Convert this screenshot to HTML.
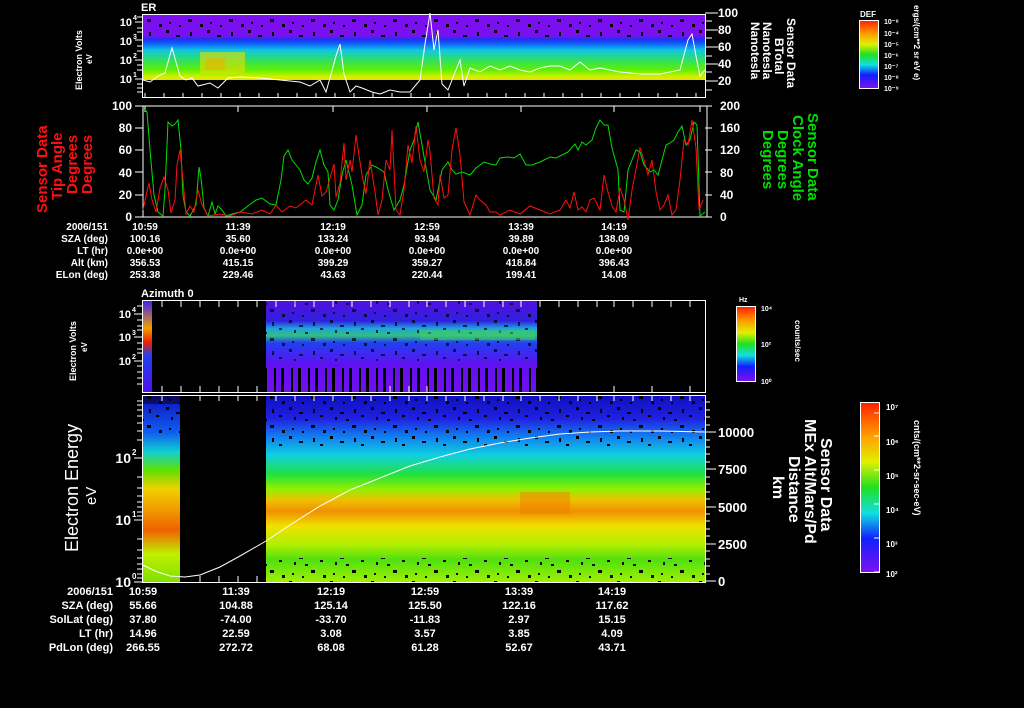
<!DOCTYPE html>
<html><head><meta charset="utf-8"><style>
html,body{margin:0;padding:0;background:#000;}
svg{display:block;}
text{font-family:"Liberation Sans",sans-serif;fill:#fff;font-weight:bold;}
</style></head><body>
<svg width="1024" height="708" viewBox="0 0 1024 708" xmlns="http://www.w3.org/2000/svg">
<defs>
<linearGradient id="p1" x1="0" y1="0" x2="0" y2="1">
<stop offset="0" stop-color="#7a10f0"/><stop offset="0.33" stop-color="#7a10f0"/>
<stop offset="0.38" stop-color="#2030f0"/><stop offset="0.45" stop-color="#1060ff"/>
<stop offset="0.55" stop-color="#10c8e0"/><stop offset="0.7" stop-color="#30e060"/>
<stop offset="0.85" stop-color="#60f000"/><stop offset="0.95" stop-color="#d0f000"/><stop offset="1" stop-color="#f0e000"/>
</linearGradient>
<linearGradient id="p4" x1="0" y1="0" x2="0" y2="1">
<stop offset="0" stop-color="#1010c0"/><stop offset="0.12" stop-color="#2020e0"/>
<stop offset="0.22" stop-color="#1080f0"/><stop offset="0.32" stop-color="#10d0e0"/>
<stop offset="0.42" stop-color="#20e040"/><stop offset="0.5" stop-color="#90f000"/>
<stop offset="0.56" stop-color="#f0c000"/><stop offset="0.62" stop-color="#f09000"/>
<stop offset="0.7" stop-color="#f0e000"/><stop offset="0.8" stop-color="#b0f000"/>
<stop offset="0.88" stop-color="#50e010"/><stop offset="1" stop-color="#a0f000"/>
</linearGradient>
<linearGradient id="p4l" x1="0" y1="0" x2="0" y2="1">
<stop offset="0" stop-color="#1010c0"/><stop offset="0.2" stop-color="#1060f0"/>
<stop offset="0.3" stop-color="#10d0d0"/><stop offset="0.4" stop-color="#60e000"/>
<stop offset="0.5" stop-color="#f0d000"/><stop offset="0.6" stop-color="#f0a000"/>
<stop offset="0.72" stop-color="#f06000"/><stop offset="0.85" stop-color="#c0f000"/><stop offset="1" stop-color="#80e000"/>
</linearGradient>
<linearGradient id="p3" x1="0" y1="0" x2="0" y2="1">
<stop offset="0" stop-color="#5010e0"/><stop offset="0.22" stop-color="#3020e0"/>
<stop offset="0.3" stop-color="#20a0e0"/><stop offset="0.38" stop-color="#30c080"/>
<stop offset="0.46" stop-color="#2040f0"/><stop offset="0.7" stop-color="#6010f0"/><stop offset="1" stop-color="#7010f0"/>
</linearGradient>
<linearGradient id="p3l" x1="0" y1="0" x2="0" y2="1">
<stop offset="0" stop-color="#4020f0"/><stop offset="0.3" stop-color="#f0a000"/>
<stop offset="0.45" stop-color="#f02000"/><stop offset="0.6" stop-color="#2040f0"/><stop offset="1" stop-color="#5010f0"/>
</linearGradient>
<linearGradient id="cb" x1="0" y1="0" x2="0" y2="1">
<stop offset="0" stop-color="#ff2000"/><stop offset="0.2" stop-color="#ffa000"/>
<stop offset="0.35" stop-color="#e0f000"/><stop offset="0.5" stop-color="#20e020"/>
<stop offset="0.65" stop-color="#10e0e0"/><stop offset="0.8" stop-color="#1020ff"/><stop offset="1" stop-color="#8010f0"/>
</linearGradient>
<pattern id="spk" width="41" height="29" patternUnits="userSpaceOnUse">
<rect x="2" y="1" width="3" height="3" fill="#000"/><rect x="12" y="6" width="4" height="2" fill="#000"/>
<rect x="7" y="11" width="2" height="3" fill="#000"/><rect x="18" y="13" width="3" height="2" fill="#000"/>
<rect x="26" y="3" width="2" height="4" fill="#000"/><rect x="33" y="9" width="3" height="2" fill="#000"/>
<rect x="24" y="19" width="4" height="3" fill="#000"/><rect x="5" y="22" width="2" height="2" fill="#000"/>
<rect x="36" y="24" width="3" height="3" fill="#000"/><rect x="15" y="25" width="2" height="2" fill="#000"/>
</pattern>
<pattern id="vst" width="17" height="40" patternUnits="userSpaceOnUse">
<rect x="2" y="0" width="2" height="40" fill="#000"/><rect x="9" y="0" width="3" height="40" fill="#000"/>
</pattern>
</defs>

<!-- PANEL 1 -->
<text x="141" y="11" font-size="11">ER</text>
<rect x="143" y="14" width="562" height="66" fill="url(#p1)"/>
<rect x="143" y="14" width="562" height="24" fill="url(#spk)"/>
<rect x="200" y="52" width="45" height="22" fill="#e8e000" opacity="0.6"/>
<rect x="205" y="58" width="20" height="12" fill="#f0b000" opacity="0.6"/>
<polyline fill="none" stroke="#fff" stroke-width="1" points="143,80 150,82 158,76 165,73 172,48 176,62 180,76 186,80 192,78 198,86 210,83 218,88 228,78 240,77 260,78 280,80 300,82 310,86 320,80 326,92 330,78 336,56 340,44 344,74 350,92 356,86 362,88 372,92 380,94 390,90 400,92 410,92 420,80 425,44 430,13 434,50 438,30 442,84 448,90 452,80 460,60 464,86 470,68 480,72 490,66 500,70 510,66 520,70 530,72 540,68 550,66 560,66 570,70 580,62 590,70 600,68 610,70 620,72 640,74 660,74 680,70 688,40 692,34 696,56 700,76 705,70"/>
<rect x="142.5" y="14.5" width="563" height="83" fill="none" stroke="#fff"/>
<g stroke="#fff">
<path d="M145 93V98M164 93V98M183 93V98M202 93V98M221 93V98M240 93V98M259 93V98M278 93V98M297 93V98M316 93V98M335 93V98M354 93V98M373 93V98M392 93V98M411 93V98M430 93V98M449 93V98M468 93V98M487 93V98M506 93V98M525 93V98M544 93V98M563 93V98M582 93V98M601 93V98M620 93V98M639 93V98M658 93V98M677 93V98M696 93V98"/>
<path d="M135 22H143M135 40H143M135 60H143M135 79H143M137 17H143M137 28H143M137 32H143M137 46H143M137 51H143M137 65H143M137 70H143M137 84H143M137 88H143M137 92H143"/>
<path d="M705 13H718M705 30H718M705 47H718M705 64H718M705 81H718M705 21H712M705 38H712M705 56H712M705 72H712M705 90H712"/>
</g>
<g font-size="11" text-anchor="end">
<text x="132" y="26">10</text><text x="132" y="45">10</text><text x="132" y="64">10</text><text x="132" y="83">10</text>
</g>
<g font-size="7"><text x="133" y="20">4</text><text x="133" y="39">3</text><text x="133" y="58">2</text><text x="133" y="77">1</text></g>
<g font-size="12"><text x="718" y="17">100</text><text x="718" y="34">80</text><text x="718" y="51">60</text><text x="718" y="68">40</text><text x="718" y="85">20</text></g>
<text transform="translate(82,90) rotate(-90)" font-size="9">Electron Volts</text>
<text transform="translate(92,64) rotate(-90)" font-size="8">eV</text>
<g font-size="12" style="font-weight:normal">
<text transform="translate(787,18) rotate(90)">Sensor Data</text>
<text transform="translate(775,38) rotate(90)">BTotal</text>
<text transform="translate(763,22) rotate(90)">Nanotesla</text>
<text transform="translate(751,22) rotate(90)">Nanotesla</text>
</g>
<text x="860" y="17" font-size="8">DEF</text>
<rect x="859.5" y="20.5" width="19" height="68" fill="url(#cb)" stroke="#fff"/>
<g font-size="7"><text x="884" y="24">10⁻⁸</text><text x="884" y="36">10⁻⁴</text><text x="884" y="47">10⁻⁵</text><text x="884" y="58">10⁻⁶</text><text x="884" y="69">10⁻⁷</text><text x="884" y="80">10⁻⁸</text><text x="884" y="91">10⁻⁹</text></g>
<text transform="translate(914,5) rotate(90)" font-size="8">ergs/(cm**2 sr eV e)</text>

<!-- PANEL 2 -->
<g stroke="#fff">
<path d="M143 106V217" />
<path d="M135 106H143M135 128H143M135 150H143M135 172H143M135 195H143M135 217H143"/>
<path d="M145 106V112M238 106V112M333 106V112M427 106V112M521 106V112M614 106V112M700 106V112"/>
<path d="M705 106H712M705 128H712M705 150H712M705 172H712M705 195H712M705 217H712"/>
</g>
<path d="M143 106H707V217H143" fill="none" stroke="#fff"/>
<polyline fill="none" stroke="#00e000" stroke-width="1" points="143,108 147,112 150,150 154,195 158,212 163,216 165,190 168,122 172,126 175,124 178,120 181,150 183,196 186,212 190,216 196,205 199,167 201,178 204,208 208,216 212,202 215,214 218,206 222,210 226,216 232,214 240,212 248,206 256,200 262,198 270,204 276,205 281,180 284,156 288,150 292,160 296,165 300,170 304,180 308,184 312,178 316,162 320,150 324,165 328,172 330,205 334,210 338,200 342,175 346,160 352,185 357,215 362,205 366,175 372,165 378,168 384,172 388,190 394,210 400,200 404,185 410,150 414,140 418,122 422,145 426,168 430,190 436,200 442,170 448,162 452,170 456,174 462,172 470,175 476,168 484,162 490,164 496,165 500,158 508,157 514,158 520,154 526,165 532,165 540,162 550,157 556,158 562,155 568,152 575,144 578,150 582,142 586,145 592,140 596,128 600,120 604,125 608,125 612,148 618,170 620,210 624,212 628,170 632,160 636,150 640,152 644,165 650,172 654,170 658,175 662,160 666,145 670,143 674,140 678,132 682,126 686,145 690,140 694,122 697,125 700,216 705,212"/>
<polyline fill="none" stroke="#ff1010" stroke-width="1" points="143,210 146,196 149,183 152,200 156,212 160,188 164,177 168,190 171,213 175,200 177,165 180,150 183,180 186,214 190,206 194,212 196,200 198,190 202,205 208,216 220,214 230,216 240,212 252,214 262,210 270,214 276,205 282,212 290,206 296,208 306,200 312,205 318,175 322,196 326,192 330,178 334,164 336,197 340,183 344,143 346,180 350,160 352,172 356,135 360,162 362,175 366,194 370,160 375,192 378,215 382,200 386,160 390,170 392,130 396,210 400,215 404,190 408,145 412,163 416,126 420,160 424,172 428,140 430,152 434,198 438,205 440,175 444,198 448,195 452,150 456,128 460,155 464,202 470,215 476,195 480,200 486,205 490,212 496,212 500,215 510,210 520,214 530,206 540,210 550,214 560,210 566,200 570,208 574,192 578,210 582,207 586,212 590,200 594,198 600,210 604,175 608,192 612,206 616,212 620,188 624,200 628,220 632,190 640,148 644,160 648,175 652,160 656,192 660,210 664,205 668,195 672,215 676,210 680,180 684,140 688,145 692,120 696,148 699,210 703,200"/>
<g font-size="12" text-anchor="end"><text x="132" y="110">100</text><text x="132" y="132">80</text><text x="132" y="154">60</text><text x="132" y="177">40</text><text x="132" y="199">20</text><text x="132" y="221">0</text></g>
<g font-size="12"><text x="720" y="110">200</text><text x="720" y="132">160</text><text x="720" y="154">120</text><text x="720" y="177">80</text><text x="720" y="199">40</text><text x="720" y="221">0</text></g>
<g font-size="15" style="font-weight:normal">
<text transform="translate(47,213) rotate(-90)" style="fill:#ff1010">Sensor Data</text>
<text transform="translate(62,200) rotate(-90)" style="fill:#ff1010">Tip Angle</text>
<text transform="translate(77,194) rotate(-90)" style="fill:#ff1010">Degrees</text>
<text transform="translate(92,194) rotate(-90)" style="fill:#ff1010">Degrees</text>
</g>
<g font-size="15" style="font-weight:normal">
<text transform="translate(808,113) rotate(90)" style="fill:#00e000">Sensor Data</text>
<text transform="translate(793,115) rotate(90)" style="fill:#00e000">Clock Angle</text>
<text transform="translate(778,130) rotate(90)" style="fill:#00e000">Degrees</text>
<text transform="translate(763,130) rotate(90)" style="fill:#00e000">Degrees</text>
</g>
<g font-size="10">
<g text-anchor="end"><text x="108" y="230">2006/151</text><text x="108" y="242">SZA (deg)</text><text x="108" y="254">LT (hr)</text><text x="108" y="266">Alt (km)</text><text x="108" y="278">ELon (deg)</text></g>
<g text-anchor="middle">
<text x="145" y="230">10:59</text><text x="145" y="242">100.16</text><text x="145" y="254">0.0e+00</text><text x="145" y="266">356.53</text><text x="145" y="278">253.38</text>
<text x="238" y="230">11:39</text><text x="238" y="242">35.60</text><text x="238" y="254">0.0e+00</text><text x="238" y="266">415.15</text><text x="238" y="278">229.46</text>
<text x="333" y="230">12:19</text><text x="333" y="242">133.24</text><text x="333" y="254">0.0e+00</text><text x="333" y="266">399.29</text><text x="333" y="278">43.63</text>
<text x="427" y="230">12:59</text><text x="427" y="242">93.94</text><text x="427" y="254">0.0e+00</text><text x="427" y="266">359.27</text><text x="427" y="278">220.44</text>
<text x="521" y="230">13:39</text><text x="521" y="242">39.89</text><text x="521" y="254">0.0e+00</text><text x="521" y="266">418.84</text><text x="521" y="278">199.41</text>
<text x="614" y="230">14:19</text><text x="614" y="242">138.09</text><text x="614" y="254">0.0e+00</text><text x="614" y="266">396.43</text><text x="614" y="278">14.08</text>
</g></g>

<!-- PANEL 3 -->
<text x="141" y="297" font-size="11">Azimuth 0</text>
<rect x="143" y="301" width="9" height="91" fill="url(#p3l)"/>
<rect x="266" y="301" width="271" height="91" fill="url(#p3)"/>
<rect x="266" y="301" width="271" height="60" fill="url(#spk)" opacity="0.7"/>
<rect x="266" y="368" width="271" height="24" fill="url(#vst)"/>
<rect x="420" y="330" width="115" height="10" fill="#40d060" opacity="0.5"/>
<rect x="142.5" y="300.5" width="563" height="92" fill="none" stroke="#fff"/>
<g stroke="#fff">
<path d="M162 301V307M181 301V307M200 301V307M219 301V307M238 301V307M257 301V307M276 301V307M295 301V307M314 301V307M333 301V307M352 301V307M371 301V307M390 301V307M409 301V307M427 301V307M446 301V307M465 301V307M484 301V307M503 301V307M521 301V307M540 301V307M559 301V307M578 301V307M597 301V307M614 301V307M633 301V307M652 301V307M671 301V307M690 301V307"/>
<path d="M162 392V386M181 392V386M200 392V386M219 392V386M238 392V386M257 392V386M390 392V386M409 392V386M427 392V386M614 392V386M652 392V386M690 392V386"/>
<path d="M134 314H143M134 337H143M134 361H143M137 306H143M137 320H143M137 326H143M137 330H143M137 343H143M137 349H143M137 353H143M137 366H143M137 372H143M137 378H143M137 384H143"/>
</g>
<g font-size="11" text-anchor="end"><text x="131" y="318">10</text><text x="131" y="341">10</text><text x="131" y="365">10</text></g>
<g font-size="7"><text x="132" y="312">4</text><text x="132" y="335">3</text><text x="132" y="359">2</text></g>
<text transform="translate(76,381) rotate(-90)" font-size="9">Electron Volts</text>
<text transform="translate(87,352) rotate(-90)" font-size="8">eV</text>
<text x="739" y="302" font-size="7">Hz</text>
<rect x="736.5" y="306.5" width="19" height="75" fill="url(#cb)" stroke="#fff"/>
<g font-size="7"><text x="761" y="311">10⁴</text><text x="761" y="347">10²</text><text x="761" y="384">10⁰</text></g>
<text transform="translate(795,320) rotate(90)" font-size="8">counts/sec</text>

<!-- PANEL 4 -->
<rect x="143" y="396" width="37" height="186" fill="url(#p4l)"/>
<rect x="266" y="396" width="439" height="186" fill="url(#p4)"/>
<rect x="143" y="396" width="37" height="40" fill="url(#spk)"/>
<rect x="266" y="396" width="439" height="50" fill="url(#spk)"/>
<rect x="266" y="558" width="439" height="24" fill="url(#spk)"/>
<rect x="143" y="396" width="37" height="8" fill="#000" opacity="0.5"/>
<rect x="520" y="492" width="50" height="22" fill="#f08000" opacity="0.5"/>
<polyline fill="none" stroke="#fff" stroke-width="1" points="143,565 155,571 170,576 185,577 200,575 220,567 240,556 266,541 290,525 320,506 350,490 380,478 410,466 440,457 470,449 500,443 530,438 560,434 590,432 620,431 660,431 705,432"/>
<rect x="142.5" y="395.5" width="563" height="187" fill="none" stroke="#fff"/>
<g stroke="#fff">
<path d="M134 458H143M134 520H143M134 582H143M137 401H143M137 405H143M137 410H143M137 416H143M137 423H143M137 431H143M137 440H143M137 477H143M137 488H143M137 496H143M137 502H143M137 507H143M137 512H143M137 516H143M137 539H143M137 550H143M137 558H143M137 564H143M137 569H143M137 574H143M137 578H143"/>
<path d="M705 432H716M705 469H716M705 507H716M705 544H716M705 581H716M705 402H710M705 410H710M705 417H710M705 425H710M705 440H710M705 447H710M705 454H710M705 462H710M705 477H710M705 484H710M705 492H710M705 499H710M705 514H710M705 521H710M705 529H710M705 536H710M705 551H710M705 559H710M705 566H710M705 574H710"/>
<path d="M162 396V401M200 396V401M219 396V401M238 396V401M257 396V401M276 396V401M295 396V401M314 396V401M333 396V401M352 396V401M371 396V401M390 396V401M409 396V401M427 396V401M446 396V401M465 396V401M484 396V401M503 396V401M521 396V401M540 396V401M559 396V401M578 396V401M597 396V401M614 396V401M633 396V401M652 396V401M671 396V401M690 396V401"/>
<path d="M200 582V576M219 582V576M238 582V576M257 582V576"/>
</g>
<g font-size="14" text-anchor="end" style="font-weight:normal"><text x="131" y="463">10</text><text x="131" y="525">10</text><text x="131" y="587">10</text></g>
<g font-size="8"><text x="132" y="455">2</text><text x="132" y="517">1</text><text x="132" y="579">0</text></g>
<g font-size="13" style="font-weight:normal"><text x="718" y="437">10000</text><text x="718" y="474">7500</text><text x="718" y="512">5000</text><text x="718" y="549">2500</text><text x="718" y="586">0</text></g>
<text transform="translate(78,552) rotate(-90)" font-size="18" style="font-weight:normal">Electron Energy</text>
<text transform="translate(96,505) rotate(-90)" font-size="15" style="font-weight:normal">eV</text>
<g font-size="16" style="font-weight:normal">
<text transform="translate(821,438) rotate(90)">Sensor Data</text>
<text transform="translate(805,419) rotate(90)">MEx Alt/Mars/Pd</text>
<text transform="translate(789,456) rotate(90)">Distance</text>
<text transform="translate(773,476) rotate(90)">km</text>
</g>
<rect x="860.5" y="402.5" width="19" height="170" fill="url(#cb)" stroke="#fff"/>
<g stroke="#fff"><path d="M874 413H880M874 436H880M874 470H880M874 504H880M874 538H880M874 572H880"/></g>
<g font-size="8"><text x="886" y="410">10⁷</text><text x="886" y="445">10⁶</text><text x="886" y="479">10⁵</text><text x="886" y="513">10⁴</text><text x="886" y="547">10³</text><text x="886" y="577">10²</text></g>
<text transform="translate(914,420) rotate(90)" font-size="9">cnts/(cm**2-sr-sec-eV)</text>

<g font-size="11">
<g text-anchor="end"><text x="113" y="595">2006/151</text><text x="113" y="609">SZA (deg)</text><text x="113" y="623">SolLat (deg)</text><text x="113" y="637">LT (hr)</text><text x="113" y="651">PdLon (deg)</text></g>
<g text-anchor="middle">
<text x="143" y="595">10:59</text><text x="143" y="609">55.66</text><text x="143" y="623">37.80</text><text x="143" y="637">14.96</text><text x="143" y="651">266.55</text>
<text x="236" y="595">11:39</text><text x="236" y="609">104.88</text><text x="236" y="623">-74.00</text><text x="236" y="637">22.59</text><text x="236" y="651">272.72</text>
<text x="331" y="595">12:19</text><text x="331" y="609">125.14</text><text x="331" y="623">-33.70</text><text x="331" y="637">3.08</text><text x="331" y="651">68.08</text>
<text x="425" y="595">12:59</text><text x="425" y="609">125.50</text><text x="425" y="623">-11.83</text><text x="425" y="637">3.57</text><text x="425" y="651">61.28</text>
<text x="519" y="595">13:39</text><text x="519" y="609">122.16</text><text x="519" y="623">2.97</text><text x="519" y="637">3.85</text><text x="519" y="651">52.67</text>
<text x="612" y="595">14:19</text><text x="612" y="609">117.62</text><text x="612" y="623">15.15</text><text x="612" y="637">4.09</text><text x="612" y="651">43.71</text>
</g></g>
</svg>
</body></html>
